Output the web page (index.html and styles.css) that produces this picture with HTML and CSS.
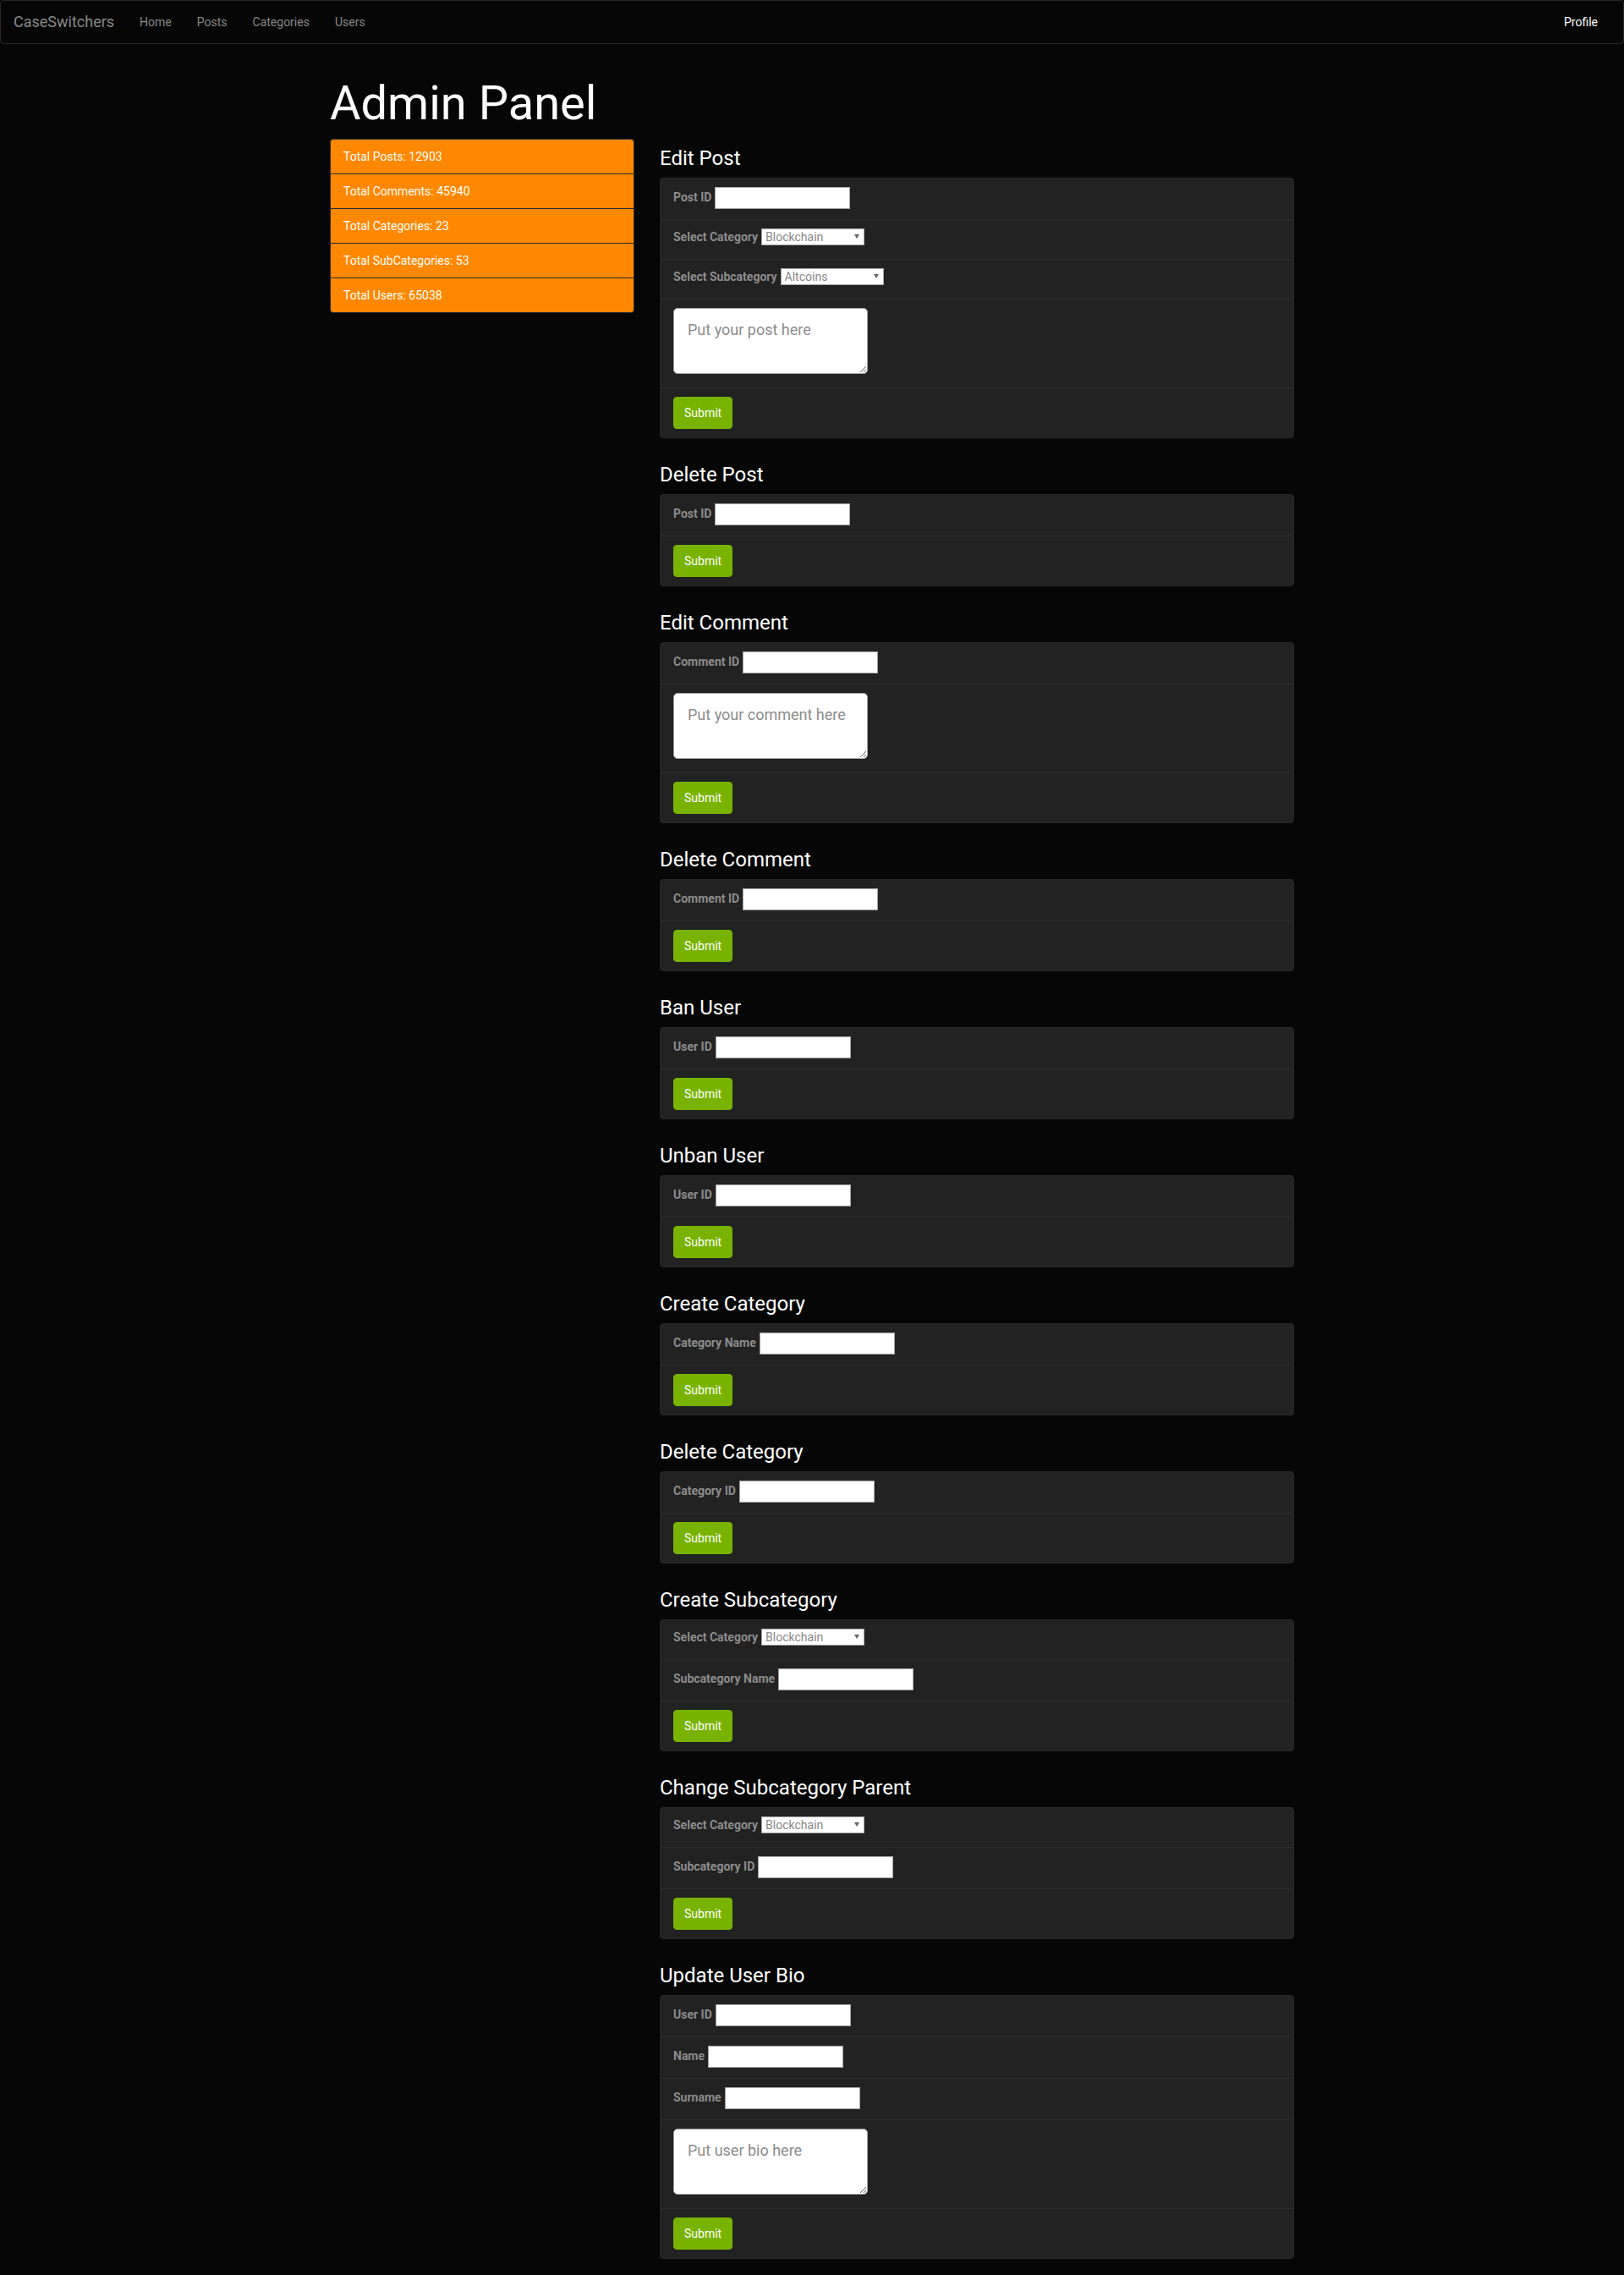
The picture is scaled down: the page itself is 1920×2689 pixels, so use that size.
FILE: index.html
```html
<!DOCTYPE html>
<html lang="en">
<head>
<meta charset="utf-8">
<title>Admin Panel - CaseSwitchers</title>
<link rel="stylesheet" href="styles.css">
</head>
<body>
<nav class="navbar">
  <div class="nav-left">
    <a class="brand" href="#">CaseSwitchers</a>
    <ul class="nav">
      <li><a href="#">Home</a></li>
      <li><a href="#">Posts</a></li>
      <li><a href="#">Categories</a></li>
      <li><a href="#">Users</a></li>
    </ul>
  </div>
  <ul class="nav">
    <li><a class="active" href="#">Profile</a></li>
  </ul>
</nav>

<div class="container">
  <h1 class="title">Admin Panel</h1>
  <div class="layout">
    <ul class="stats">
      <li class="stat">Total Posts: 12903</li>
      <li class="stat">Total Comments: 45940</li>
      <li class="stat">Total Categories: 23</li>
      <li class="stat">Total SubCategories: 53</li>
      <li class="stat">Total Users: 65038</li>
    </ul>

    <div class="forms">
      <section class="form-section">
        <h4>Edit Post</h4>
        <form class="panel">
          <div class="field field--input"><label>Post ID</label><input type="text"></div>
          <div class="field field--select"><label>Select Category</label><span class="select-wrap"><select><option>Blockchain</option></select></span></div>
          <div class="field field--select"><label>Select Subcategory</label><span class="select-wrap"><select><option>Altcoins</option></select></span></div>
          <div class="field field--text"><textarea placeholder="Put your post here"></textarea></div>
          <div class="field field--btn"><button type="button" class="btn">Submit</button></div>
        </form>
      </section>

      <section class="form-section">
        <h4>Delete Post</h4>
        <form class="panel">
          <div class="field field--input"><label>Post ID</label><input type="text"></div>
          <div class="field field--btn"><button type="button" class="btn">Submit</button></div>
        </form>
      </section>

      <section class="form-section">
        <h4>Edit Comment</h4>
        <form class="panel">
          <div class="field field--input"><label>Comment ID</label><input type="text"></div>
          <div class="field field--text"><textarea placeholder="Put your comment here"></textarea></div>
          <div class="field field--btn"><button type="button" class="btn">Submit</button></div>
        </form>
      </section>

      <section class="form-section">
        <h4>Delete Comment</h4>
        <form class="panel">
          <div class="field field--input"><label>Comment ID</label><input type="text"></div>
          <div class="field field--btn"><button type="button" class="btn">Submit</button></div>
        </form>
      </section>

      <section class="form-section">
        <h4>Ban User</h4>
        <form class="panel">
          <div class="field field--input"><label>User ID</label><input type="text"></div>
          <div class="field field--btn"><button type="button" class="btn">Submit</button></div>
        </form>
      </section>

      <section class="form-section">
        <h4>Unban User</h4>
        <form class="panel">
          <div class="field field--input"><label>User ID</label><input type="text"></div>
          <div class="field field--btn"><button type="button" class="btn">Submit</button></div>
        </form>
      </section>

      <section class="form-section">
        <h4>Create Category</h4>
        <form class="panel">
          <div class="field field--input"><label>Category Name</label><input type="text"></div>
          <div class="field field--btn"><button type="button" class="btn">Submit</button></div>
        </form>
      </section>

      <section class="form-section">
        <h4>Delete Category</h4>
        <form class="panel">
          <div class="field field--input"><label>Category ID</label><input type="text"></div>
          <div class="field field--btn"><button type="button" class="btn">Submit</button></div>
        </form>
      </section>

      <section class="form-section">
        <h4>Create Subcategory</h4>
        <form class="panel">
          <div class="field field--select"><label>Select Category</label><span class="select-wrap"><select><option>Blockchain</option></select></span></div>
          <div class="field field--input"><label>Subcategory Name</label><input type="text"></div>
          <div class="field field--btn"><button type="button" class="btn">Submit</button></div>
        </form>
      </section>

      <section class="form-section">
        <h4>Change Subcategory Parent</h4>
        <form class="panel">
          <div class="field field--select"><label>Select Category</label><span class="select-wrap"><select><option>Blockchain</option></select></span></div>
          <div class="field field--input"><label>Subcategory ID</label><input type="text"></div>
          <div class="field field--btn"><button type="button" class="btn">Submit</button></div>
        </form>
      </section>

      <section class="form-section">
        <h4>Update User Bio</h4>
        <form class="panel">
          <div class="field field--input"><label>User ID</label><input type="text"></div>
          <div class="field field--input"><label>Name</label><input type="text"></div>
          <div class="field field--input"><label>Surname</label><input type="text"></div>
          <div class="field field--text"><textarea placeholder="Put user bio here"></textarea></div>
          <div class="field field--btn"><button type="button" class="btn">Submit</button></div>
        </form>
      </section>
    </div>
  </div>
</div>
</body>
</html>
```

FILE: styles.css
```css
* { box-sizing: border-box; }

html, body {
  margin: 0;
  background: #060606;
}

body {
  color: #888;
  font-family: Roboto, "Liberation Sans", Arial, sans-serif;
  font-size: 14px;
  line-height: 1.42857;
}

/* Navbar */
.navbar {
  height: 52px;
  border: 1px solid #282828;
  border-radius: 4px;
  background: #060606;
  margin-bottom: 20px;
  display: flex;
  justify-content: space-between;
  padding: 0 15px 0 0;
}

.nav-left {
  display: flex;
}

.brand {
  display: block;
  padding: 15px;
  font-size: 18px;
  line-height: 20px;
  color: #888;
  text-decoration: none;
}

.nav {
  display: flex;
  list-style: none;
  margin: 0;
  padding: 0;
}

.nav a {
  display: block;
  padding: 15px;
  line-height: 20px;
  color: #888;
  text-decoration: none;
}

.nav a.active {
  color: #fff;
}

/* Layout */
.container {
  display: flow-root;
  width: 1140px;
  margin: 0 auto;
}

.title {
  font-size: 56px;
  line-height: 1.1;
  font-weight: 400;
  color: #fff;
  margin: 20px 0 10px;
}

.layout {
  display: grid;
  grid-template-columns: 360px 750px;
  column-gap: 30px;
  align-items: start;
}

/* Stats */
.stats {
  list-style: none;
  margin: 0 0 20px;
  padding: 0;
}

.stat {
  background: #ff8800;
  color: #fff;
  border: 1px solid #262b33;
  padding: 10px 15px;
  margin-bottom: -1px;
  line-height: 20px;
}

.stat:first-child {
  border-radius: 4px 4px 0 0;
}

.stat:last-child {
  border-radius: 0 0 4px 4px;
  margin-bottom: 0;
}

/* Forms */
.forms {
  display: flex;
  flex-direction: column;
}

.form-section h4 {
  font-size: 24px;
  line-height: 26px;
  font-weight: 400;
  color: #fff;
  margin: 10px 0;
}

.panel {
  display: block;
  background: #222;
  border: 1px solid #282828;
  border-radius: 4px;
  margin: 0 0 20px;
}

.field {
  display: flex;
  align-items: flex-start;
  padding: 10px 15px;
  border-top: 1px solid #2c2c2c;
}

.field:first-child {
  border-top: none;
}

.field label {
  font-weight: 700;
  line-height: 20px;
  margin-right: 4px;
  color: #8c8c8c;
}

.field--input label {
  margin-top: 2px;
}

.field input {
  width: 160px;
  height: 26px;
  margin: 0 0 2px;
  padding: 1px 2px;
  border: 1px solid #a4a4a4;
  background: #fff;
  color: #888;
  font: inherit;
  line-height: 20px;
  outline: none;
}

.select-wrap {
  position: relative;
  display: block;
  width: 122px;
  height: 20px;
  margin-bottom: 6px;
}

.select-wrap select {
  -webkit-appearance: none;
  appearance: none;
  display: block;
  width: 100%;
  height: 20px;
  margin: 0;
  padding: 0 14px 0 4px;
  border: 1px solid #a4a4a4;
  border-radius: 0;
  background: #fff;
  color: #888;
  font-family: inherit;
  font-size: 14px;
  line-height: 18px;
  outline: none;
}

.select-wrap::after {
  content: "";
  position: absolute;
  right: 6px;
  top: 7px;
  width: 0;
  height: 0;
  border-left: 3px solid transparent;
  border-right: 3px solid transparent;
  border-top: 5px solid #666;
  pointer-events: none;
}

.field textarea {
  display: block;
  width: 230px;
  height: 78px;
  margin: 0 0 6px;
  padding: 12px 16px;
  border: 1px solid #a4a4a4;
  border-radius: 5px;
  background: #fff;
  color: #888;
  font-family: inherit;
  font-size: 18px;
  line-height: 1.42857;
  outline: none;
}

.field textarea::placeholder {
  color: #8c8c8c;
}

.btn {
  display: block;
  height: 38px;
  padding: 8px 12px;
  border: 1px solid #77b300;
  border-radius: 4px;
  background: #77b300;
  color: #fff;
  font-family: inherit;
  font-size: 14px;
  line-height: 20px;
  cursor: pointer;
}
```
